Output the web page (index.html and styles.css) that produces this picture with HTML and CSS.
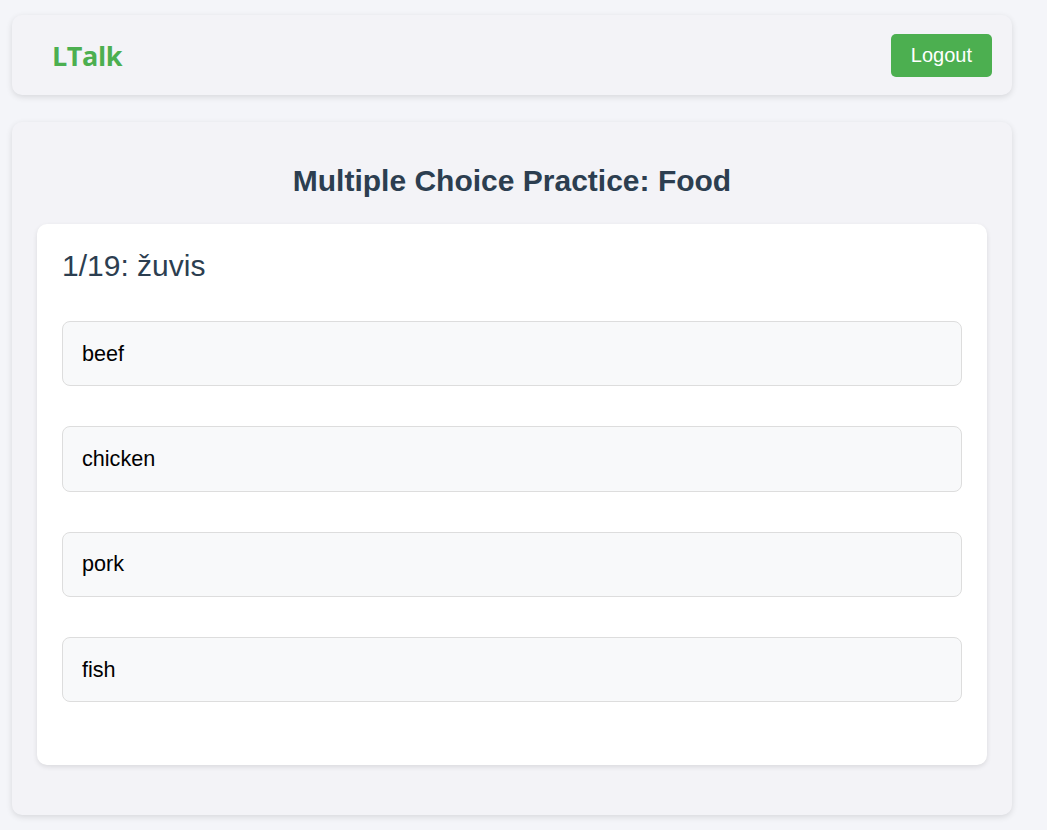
FILE: index.html
```html
<!DOCTYPE html>
<html lang="en">
<head>
<meta charset="utf-8">
<title>LTalk</title>
<link rel="stylesheet" href="styles.css">
</head>
<body>
<div class="page">
  <header class="topbar">
    <div class="logo">LTalk</div>
    <button class="logout">Logout</button>
  </header>
  <main class="practice">
    <h2 class="title">Multiple Choice Practice: Food</h2>
    <section class="quiz">
      <h3 class="question">1/19: žuvis</h3>
      <div class="options">
        <button class="option">beef</button>
        <button class="option">chicken</button>
        <button class="option">pork</button>
        <button class="option">fish</button>
      </div>
    </section>
  </main>
</div>
</body>
</html>
```

FILE: styles.css
```css
html, body {
  margin: 0;
  padding: 0;
  background: #f4f5f9;
  font-family: "Liberation Sans", Arial, sans-serif;
}
.page {
  width: 1000px;
  padding: 15px 12px;
  display: flex;
  flex-direction: column;
  gap: 27px;
}
.topbar {
  height: 80px;
  box-sizing: border-box;
  background: #f3f3f7;
  border-radius: 10px;
  box-shadow: 0 2px 6px rgba(0,0,0,0.12);
  display: flex;
  align-items: center;
  justify-content: space-between;
  padding: 0 20px 0 40px;
}
.logo {
  font-family: "Open Sans", sans-serif;
  font-weight: 700;
  font-size: 27px;
  color: #4caf50;
  letter-spacing: -0.4px;
}
.logout {
  background: #4caf50;
  color: #fff;
  border: none;
  border-radius: 5px;
  font-family: "Liberation Sans", Arial, sans-serif;
  font-size: 20px;
  padding: 10px 20px;
  height: 43px;
  cursor: pointer;
}
.practice {
  background: #f3f3f7;
  border-radius: 10px;
  box-shadow: 0 2px 6px rgba(0,0,0,0.12);
  padding: 42px 25px 50px;
}
.title {
  margin: 0 0 26px;
  text-align: center;
  font-size: 30px;
  font-weight: 700;
  color: #2c3e50;
  line-height: 34px;
}
.quiz {
  background: #fff;
  border-radius: 10px;
  box-shadow: 0 2px 5px rgba(0,0,0,0.1);
  padding: 25px 25px 63px;
}
.question {
  margin: 0 0 38px;
  font-size: 30px;
  font-weight: 400;
  color: #2c3e50;
  line-height: 34px;
}
.options {
  display: flex;
  flex-direction: column;
  gap: 40px;
}
.option {
  display: block;
  width: 100%;
  height: 65.33px;
  text-align: left;
  background: #f8f9fa;
  border: 1px solid #dddddd;
  border-radius: 8px;
  padding: 0 19px;
  font-family: "Liberation Sans", Arial, sans-serif;
  font-size: 21.6px;
  color: #000;
  cursor: pointer;
}
```
